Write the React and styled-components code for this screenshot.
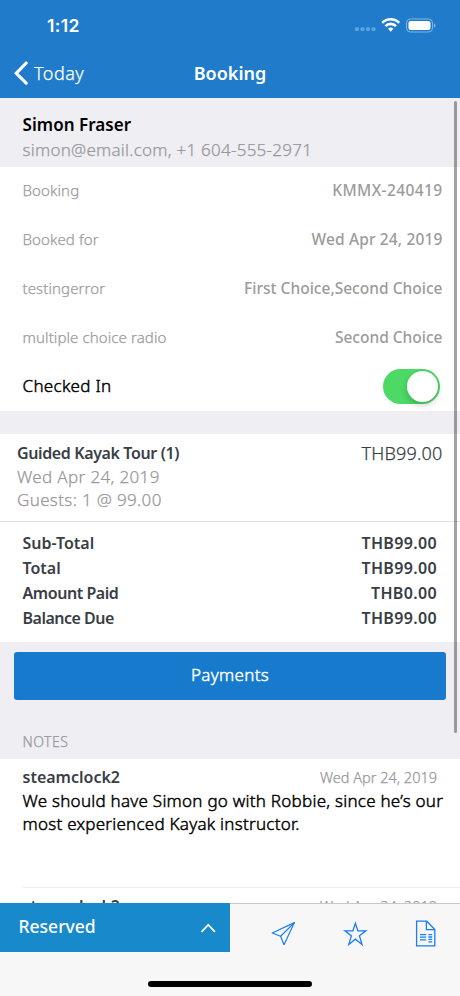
import React, { useState } from "react";
import styled, { createGlobalStyle, css } from "styled-components";

const fields = [
  { label: "Booking", value: "KMMX-240419", track: 0.4 },
  { label: "Booked for", value: "Wed Apr 24, 2019", track: 0.15 },
  { label: "testingerror", value: "First Choice,Second Choice", track: 0.02 },
  { label: "multiple choice radio", value: "Second Choice", track: 0 },
];

const totals = [
  { label: "Sub-Total", value: "THB99.00", track: 0 },
  { label: "Total", value: "THB99.00", track: 0 },
  { label: "Amount Paid", value: "THB0.00", track: -0.45 },
  { label: "Balance Due", value: "THB99.00", track: -0.5 },
];

const notes = [
  {
    author: "steamclock2",
    date: "Wed Apr 24, 2019",
    text: "We should have Simon go with Robbie, since he’s our most experienced Kayak instructor.",
  },
  { author: "steamclock2", date: "Wed Apr 24, 2019", text: "" },
];

const StatusIcons = () => {
  return (
    <svg width="84" height="18" viewBox="0 0 84 18" fill="none">
      <g fill="#5ba3e0">
        <rect x="1" y="11.2" width="4" height="3.8" rx="1.2" />
        <rect x="6.5" y="11.2" width="4" height="3.8" rx="1.2" />
        <rect x="12" y="11.2" width="4" height="3.8" rx="1.2" />
        <rect x="17.5" y="11.2" width="4" height="3.8" rx="1.2" />
      </g>
      <g stroke="#fff" strokeWidth="2.6">
        <path d="M28.2 6.8a12 12 0 0 1 17 0" />
        <path d="M31.4 10.1a7.4 7.4 0 0 1 10.6 0" />
      </g>
      <path d="M34 12.8a4 4 0 0 1 5.4 0l-2.7 3z" fill="#fff" />
      <rect x="52.5" y="3" width="26" height="13" rx="4" stroke="#7fb6e6" />
      <rect x="54.5" y="5" width="22" height="9" rx="2.2" fill="#fff" />
      <path d="M80 7.3c2 .8 2 3.6 0 4.4z" fill="#7fb6e6" />
    </svg>
  );
};

const BackIcon = () => {
  return (
    <svg width="14" height="24" viewBox="0 0 14 24" fill="none">
      <path d="M12.2 2 2.2 12.3l10 9.9" stroke="#fff" strokeWidth="3.1" strokeLinecap="round" strokeLinejoin="miter" />
    </svg>
  );
};

const ChevronUp = () => {
  return (
    <svg width="16" height="10" viewBox="0 0 16 10" fill="none">
      <path d="M1.5 8.8 8.2 1.8l6.8 7" stroke="#fff" strokeWidth="1.7" />
    </svg>
  );
};

const SendIcon = () => {
  return (
    <svg width="26" height="26" viewBox="0 0 26 26" fill="none" stroke="#1a7df0" strokeWidth="1.2" strokeLinejoin="round">
      <path d="M23.4 1.6 1.2 12l8.4 3.3 3.4 8.4z" />
      <path d="M23.4 1.6 9.6 15.3" />
    </svg>
  );
};

const StarIcon = () => {
  return (
    <svg width="26" height="26" viewBox="0 0 26 26" fill="none" stroke="#1a7df0" strokeWidth="1.3">
      <path d="M12.4 2.4 14.9 9.8h8l-6.5 5 2.6 8.6-6.6-5.2-6.6 5.2 2.6-8.6-6.5-5h8z" />
    </svg>
  );
};

const DocumentIcon = () => {
  return (
    <svg width="22" height="28" viewBox="0 0 22 28" fill="none" stroke="#1a7df0" strokeWidth="1.3">
      <path d="M1.6 1.2h10.2l8 8.4v16.2H1.6z" />
      <path d="M11.4 1.2v8.4h8.4" />
      <path d="M5 14.6h6.2M5 17.2h6.2M5 19.8h6.2M13.4 14.6h3.8M13.4 17h3.8M13.4 19.4h3.8M13.4 21.8h3.8" />
    </svg>
  );
};

const App = () => {
  const [checkedIn, setCheckedIn] = useState(true);

  return (
    <Screen>
      <GlobalStyle />
      <Header>
        <StatusBar>
          <Clock>1:12</Clock>
          <StatusIcons />
        </StatusBar>
        <NavBar>
          <BackButton>
            <BackIcon />
            Today
          </BackButton>
          <Title>Booking</Title>
        </NavBar>
      </Header>

      <Content>
        <Customer>
          <CustomerName>Simon Fraser</CustomerName>
          <CustomerContact>simon@email.com, +1 604-555-2971</CustomerContact>
        </Customer>

        <Fields>
          {fields.map(({ label, value, track }) => (
            <Field key={label}>
              <FieldLabel>{label}</FieldLabel>
              <FieldValue $track={track}>{value}</FieldValue>
            </Field>
          ))}
          <CheckedIn>
            <CheckedInLabel>Checked In</CheckedInLabel>
            <Switch
              role="switch"
              aria-checked={checkedIn}
              $on={checkedIn}
              onClick={() => setCheckedIn(!checkedIn)}
            />
          </CheckedIn>
        </Fields>

        <Item>
          <div>
            <ItemName>Guided Kayak Tour (1)</ItemName>
            <ItemInfo>Wed Apr 24, 2019</ItemInfo>
            <ItemInfo>Guests: 1 @ 99.00</ItemInfo>
          </div>
          <ItemPrice>THB99.00</ItemPrice>
        </Item>

        <Totals>
          {totals.map(({ label, value, track }) => (
            <TotalRow key={label}>
              <TotalLabel $track={track}>{label}</TotalLabel>
              <Amount>{value}</Amount>
            </TotalRow>
          ))}
        </Totals>

        <PaymentArea>
          <PaymentButton>Payments</PaymentButton>
        </PaymentArea>

        <NotesHeading>NOTES</NotesHeading>
        <Notes>
          {notes.map(({ author, date, text }, i) => (
            <Note key={i}>
              <NoteTop>
                <Author>{author}</Author>
                <NoteDate>{date}</NoteDate>
              </NoteTop>
              <NoteText>{text}</NoteText>
            </Note>
          ))}
        </Notes>
        <ScrollThumb />
      </Content>

      <Footer>
        <Toolbar>
          <StatusButton>
            Reserved
            <ChevronUp />
          </StatusButton>
          <Actions>
            <SendIcon />
            <StarIcon />
            <DocumentIcon />
          </Actions>
        </Toolbar>
        <HomeIndicator />
      </Footer>
    </Screen>
  );
};

const GlobalStyle = createGlobalStyle`
  * {
    box-sizing: border-box;
  }

  body {
    margin: 0;
    font-family: "Noto Sans", "Open Sans", sans-serif;
    color: #000;
  }

  button {
    border: 0;
    padding: 0;
    font-family: inherit;
  }

  svg {
    display: block;
    flex: none;
  }
`;

const book = css`
  font-weight: 300;
  -webkit-text-stroke: 0.25px currentColor;
`;

const bookDark = css`
  font-weight: 300;
  -webkit-text-stroke: 0.45px currentColor;
`;

const Screen = styled.div`
  width: 460px;
  height: 996px;
  display: flex;
  flex-direction: column;
  overflow: hidden;
  background: #fff;
`;

const Header = styled.header`
  flex: none;
  height: 98px;
  background: #207cca;
  color: #fff;
`;

const StatusBar = styled.div`
  height: 50px;
  padding: 0 22px 0 47px;
  display: flex;
  justify-content: space-between;
  align-items: center;
`;

const Clock = styled.div`
  font-family: Inter, sans-serif;
  font-size: 17.5px;
  font-weight: 600;
  letter-spacing: 0.4px;
`;

const NavBar = styled.div`
  height: 46px;
  padding: 0 14px;
  display: grid;
  grid-template-columns: 1fr auto 1fr;
  align-items: center;
`;

const BackButton = styled.button`
  display: flex;
  align-items: center;
  gap: 6px;
  background: none;
  color: #fff;
  font-size: 18px;
  letter-spacing: 0.5px;
  ${book}
`;

const Title = styled.h1`
  margin: 0;
  font-size: 18px;
  font-weight: 600;
`;

const Content = styled.main`
  position: relative;
  flex: 1;
  min-height: 0;
  overflow: hidden;
  background: #efeef3;
`;

const Customer = styled.section`
  height: 69px;
  padding: 14px 22px 0 22.5px;
`;

const CustomerName = styled.div`
  font-size: 17px;
  line-height: 25px;
  font-weight: 600;
  letter-spacing: 0.05px;
`;

const CustomerContact = styled.div`
  font-size: 17px;
  line-height: 25px;
  letter-spacing: 0.25px;
  color: #98989c;
  ${book}
`;

const Fields = styled.section`
  height: 244px;
  background: #fff;
`;

const Field = styled.div`
  height: 48.8px;
  padding: 0 17.5px 2px 22.5px;
  display: flex;
  justify-content: space-between;
  align-items: center;
  color: #9b9b9b;
`;

const FieldLabel = styled.span`
  font-size: 15px;
  letter-spacing: 0.1px;
  ${book}
`;

const FieldValue = styled.span`
  font-size: 15.5px;
  font-weight: 500;
  letter-spacing: ${({ $track }) => $track}px;
`;

const CheckedIn = styled.div`
  height: 48px;
  padding: 0 20px 0 22.5px;
  display: flex;
  justify-content: space-between;
  align-items: center;
`;

const CheckedInLabel = styled.span`
  padding-bottom: 2px;
  font-size: 17px;
  letter-spacing: 0.3px;
  ${bookDark}
`;

const Switch = styled.button`
  width: 57px;
  height: 35px;
  padding: 2px;
  display: flex;
  justify-content: ${({ $on }) => ($on ? "flex-end" : "flex-start")};
  border-radius: 18px;
  background: ${({ $on }) => ($on ? "#4cd964" : "#e5e5ea")};

  &::after {
    content: "";
    width: 31px;
    height: 31px;
    border-radius: 50%;
    background: #fff;
    box-shadow: 0 3px 6px rgba(0, 0, 0, 0.2);
  }
`;

const Item = styled.section`
  height: 88px;
  margin-top: 23px;
  padding: 6.5px 17.5px 0 17px;
  display: flex;
  justify-content: space-between;
  background: #fff;
  border-bottom: 1px solid #e0e0e2;
`;

const ItemName = styled.div`
  font-size: 16px;
  line-height: 24px;
  font-weight: 600;
  letter-spacing: -0.38px;
  color: #393e46;
`;

const ItemInfo = styled.div`
  font-size: 17px;
  line-height: 23px;
  letter-spacing: 0.35px;
  color: #98989a;
  ${book}
`;

const ItemPrice = styled.div`
  font-size: 18px;
  line-height: 24px;
  letter-spacing: 0.2px;
  color: #393e46;
  ${book}
`;

const Totals = styled.section`
  height: 120px;
  padding: 9px 23px 0 22.5px;
  background: #fff;
`;

const TotalRow = styled.div`
  display: flex;
  justify-content: space-between;
  font-size: 16px;
  line-height: 24.9px;
  font-weight: 600;
  color: #393e46;
`;

const TotalLabel = styled.span`
  letter-spacing: ${({ $track }) => $track}px;
`;

const Amount = styled.span`
  letter-spacing: 0.35px;
`;

const PaymentArea = styled.section`
  padding: 10px 14px 0;
`;

const PaymentButton = styled.button`
  width: 100%;
  height: 48px;
  padding-bottom: 3px;
  border-radius: 3px;
  background: #177acc;
  color: #fff;
  font-size: 17px;
  letter-spacing: 0.3px;
  ${bookDark}
`;

const NotesHeading = styled.h2`
  height: 59px;
  margin: 0;
  padding: 30px 22.5px 0;
  font-size: 14px;
  line-height: 23px;
  letter-spacing: 0.5px;
  color: #98989c;
  ${book}
`;

const Notes = styled.section`
  padding-left: 22.5px;
  background: #fff;
`;

const Note = styled.article`
  height: 129px;
  padding: 6px 10px 0 0;
  border-bottom: 1px solid #ededef;
`;

const NoteTop = styled.div`
  padding-right: 13px;
  display: flex;
  justify-content: space-between;
  line-height: 24px;
`;

const Author = styled.span`
  font-size: 16px;
  font-weight: 600;
  color: #393e46;
`;

const NoteDate = styled.span`
  font-size: 14.5px;
  color: #98989a;
  ${book}
`;

const NoteText = styled.p`
  margin: 0;
  font-size: 17px;
  line-height: 23px;
  letter-spacing: 0.25px;
  ${bookDark}
`;

const ScrollThumb = styled.div`
  position: absolute;
  top: 3px;
  right: 3px;
  width: 3px;
  height: 632px;
  border-radius: 2px;
  background: rgba(0, 0, 0, 0.36);
`;

const Footer = styled.footer`
  flex: none;
  height: 93px;
  display: flex;
  flex-direction: column;
  background: #f7f7f7;
`;

const Toolbar = styled.div`
  height: 49px;
  display: flex;
`;

const StatusButton = styled.button`
  width: 230px;
  padding: 0 14px 3px 18.5px;
  display: flex;
  justify-content: space-between;
  align-items: center;
  background: #188acb;
  color: #fff;
  font-size: 17.5px;
  font-weight: 500;

  svg {
    margin-top: 4px;
  }
`;

const Actions = styled.div`
  flex: 1;
  padding: 11px 23px 0 41px;
  display: flex;
  justify-content: space-between;
  align-items: center;
  border-top: 1px solid #c9c9cb;
`;

const HomeIndicator = styled.div`
  width: 164px;
  height: 6px;
  margin: 29px auto 0;
  border-radius: 3px;
  background: #000;
`;

export default App;
